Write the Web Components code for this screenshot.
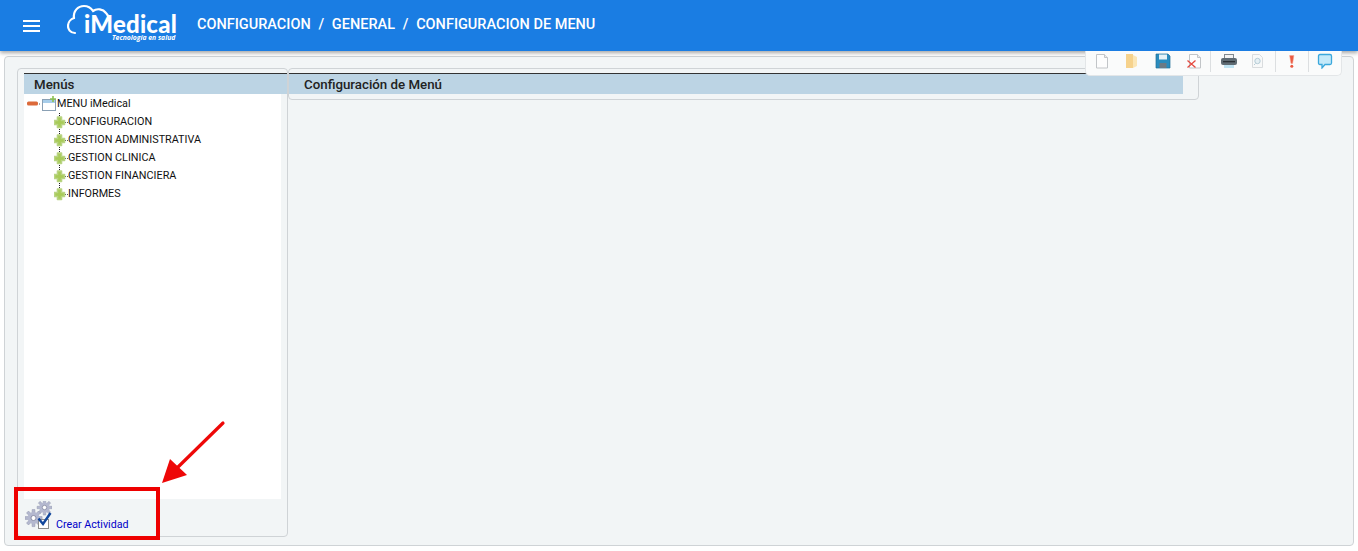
<!DOCTYPE html>
<html lang="es">
<head>
<meta charset="utf-8">
<title>iMedical</title>
<style>
    html, body { margin: 0; height: 100%; background: #fff; overflow: hidden; }
    body { font-family: Roboto, "Liberation Sans", sans-serif; }
</style>
</head>
<body>
<app-page>
    <app-header slot="header">
        <span>CONFIGURACION</span><span>/</span><span>GENERAL</span><span>/</span><span>CONFIGURACION DE MENU</span>
    </app-header>
    <left-panel slot="left" heading="Menús">
        <tree-root label="MENU iMedical">
            <tree-item>CONFIGURACION</tree-item>
            <tree-item>GESTION ADMINISTRATIVA</tree-item>
            <tree-item>GESTION CLINICA</tree-item>
            <tree-item>GESTION FINANCIERA</tree-item>
            <tree-item last>INFORMES</tree-item>
        </tree-root>
    </left-panel>
    <right-panel slot="right" heading="Configuración de Menú"></right-panel>
    <tool-bar slot="overlay"></tool-bar>
</app-page>

<script>
class AppPage extends HTMLElement {
    constructor() {
        super();
        this.attachShadow({ mode: "open" });
    }

    connectedCallback() {
        this.shadowRoot.innerHTML = `
            <style>
                :host { display: block; position: relative; width: 1358px; height: 551px; }
                #frame {
                    box-sizing: border-box;
                    height: 490px;
                    margin: 5px 4px 0 4px;
                    padding: 11px 0 8px 12px;
                    background: #f2f5f6;
                    border: 1px solid #cfd3d6;
                    border-radius: 4px;
                    display: flex;
                    align-items: flex-start;
                }
                #box { position: absolute; left: 14px; top: 487px; width: 146px; height: 53px; box-sizing: border-box; border: 4px solid #ee0000; }
                #arrow { position: absolute; left: 155px; top: 415px; }
            </style>
            <slot name="header"></slot>
            <div id="frame">
                <slot name="left"></slot>
                <slot name="right"></slot>
            </div>
            <slot name="overlay"></slot>
            <div id="box"></div>
            <svg id="arrow" width="75" height="75" viewBox="0 0 75 75">
                <path d="M68 8 21 54" stroke="#ee0808" stroke-width="3.2" stroke-linecap="round" fill="none"/>
                <path d="M7 68 15 44 32 60Z" fill="#ee0808"/>
            </svg>
        `;
    }
}

class AppHeader extends HTMLElement {
    constructor() {
        super();
        this.attachShadow({ mode: "open" });
    }

    connectedCallback() {
        this.shadowRoot.innerHTML = `
            <style>
                :host {
                    display: flex;
                    align-items: center;
                    height: 51px;
                    background: #1a7de3;
                    color: #fff;
                    box-shadow: 0 2px 4px rgba(0, 0, 0, .35);
                    position: relative;
                    padding-left: 23px;
                }
                #burger { width: 17px; display: grid; gap: 3px; margin-right: 27px; }
                #burger i { display: block; height: 2px; background: #fff; }
                #logo { position: relative; width: 130px; height: 51px; flex: none; }
                #logo svg { position: absolute; left: 0; top: 0; }
                #name {
                    position: absolute; left: 17px; top: 14px;
                    font: 900 24px/20px Lato, Roboto, sans-serif;
                    letter-spacing: .2px;
                }
                #tag {
                    position: absolute; left: 45px; top: 34px;
                    font: italic 700 6.8px/7px "Open Sans", sans-serif;
                    white-space: nowrap;
                }
                #crumbs {
                    display: flex;
                    gap: 7.75px;
                    font: 500 14.5px/18px Roboto, sans-serif;
                    position: relative;
                    top: -1px;
                }
            </style>
            <div id="burger"><i></i><i></i><i></i></div>
            <div id="logo">
                <svg width="80" height="40" viewBox="0 0 80 40" fill="none" stroke="#fff" stroke-width="2.2" stroke-linecap="round">
                    <path d="M8 33C3 33 1 29 1 26 1 22 4 19 7 18"/>
                    <path d="M7 18C6 11 11 6 17 6 21 6 24 8 26 11 30 8 36 9 39 13 41 15 42 18 42 20"/>
                </svg>
                <span id="name">iMedical</span>
                <span id="tag">Tecnología en salud</span>
            </div>
            <div id="crumbs"><slot></slot></div>
        `;
    }
}

class LeftPanel extends HTMLElement {
    constructor() {
        super();
        this.attachShadow({ mode: "open" });
    }

    connectedCallback() {
        this.shadowRoot.innerHTML = `
            <style>
                :host {
                    display: block;
                    box-sizing: border-box;
                    width: 271px;
                    height: 469px;
                    padding: 4px 0 0 6px;
                    border: 1px solid #cfd3d6;
                    border-radius: 4px;
                }
                h2 {
                    margin: 0;
                    height: 21px;
                    box-sizing: border-box;
                    padding-left: 10px;
                    background: #bcd4e4;
                    border-top: 1px solid #333;
                    color: #222;
                    font: 500 13.3px/21px Roboto, sans-serif;
                }
                #tree { box-sizing: border-box; width: 257px; height: 405px; background: #fff; padding-top: 1px; }
                #foot { display: flex; align-items: flex-end; height: 31px; padding: 1px 0 0 1px; gap: 4px; }
                #foot a { color: #0000c8; font: 10.7px/13px Roboto, sans-serif; text-decoration: none; }
            </style>
            <h2>${this.getAttribute("heading")}</h2>
            <div id="tree"><slot></slot></div>
            <div id="foot">
                <svg width="27" height="30" viewBox="0 0 27 30">
                    <defs>
                        <g id="gear">
                            <path d="M-1.4-8.4h2.8v17h-2.8zM-8.4-1.4h17v2.8h-17zM-7-5 -5-7 7 5 5 7zM5-7 7-5 -5 7 -7 5z" fill="#b4b8cf" stroke="#8f93ab" stroke-width=".5"/>
                            <circle r="6" fill="#b4b8cf"/>
                            <circle r="2.5" fill="#fff" stroke="#7c809a" stroke-width=".8"/>
                        </g>
                    </defs>
                    <use href="#gear" transform="translate(19.5 6.5) scale(.88)"/>
                    <use href="#gear" transform="translate(8.5 17)"/>
                    <rect x="13.5" y="18.5" width="10" height="9" fill="#fff" stroke="#8c8c8c"/>
                    <path d="M13.5 17.5 18 23 25.5 12" fill="none" stroke="#12479c" stroke-width="2.4"/>
                </svg>
                <a href="#">Crear Actividad</a>
            </div>
        `;
    }
}

class RightPanel extends HTMLElement {
    constructor() {
        super();
        this.attachShadow({ mode: "open" });
    }

    connectedCallback() {
        this.shadowRoot.innerHTML = `
            <style>
                :host {
                    display: block;
                    box-sizing: border-box;
                    width: 911px;
                    height: 32px;
                    padding: 4px 15px 0 0;
                    border: 1px solid #cfd3d6;
                    border-radius: 4px;
                }
                h2 {
                    margin: 0;
                    height: 21px;
                    box-sizing: border-box;
                    padding-left: 15px;
                    background: #bcd4e4;
                    border-top: 1px solid #333;
                    color: #222;
                    font: 500 13.3px/21px Roboto, sans-serif;
                }
            </style>
            <h2>${this.getAttribute("heading")}</h2>
        `;
    }
}

class TreeRoot extends HTMLElement {
    constructor() {
        super();
        this.attachShadow({ mode: "open" });
    }

    connectedCallback() {
        this.shadowRoot.innerHTML = `
            <style>
                :host { display: block; color: #111; font: 10.8px/18px Roboto, sans-serif; }
                #row { display: flex; align-items: center; height: 18px; padding-left: 3px; }
                #kids { padding-left: 30px; }
            </style>
            <div id="row">
                <svg width="30" height="18" viewBox="0 0 30 18">
                    <rect x="0" y="6.5" width="11" height="4" rx="1.5" fill="#dc6a3a"/>
                    <path d="M12 9h2" stroke="#555" stroke-dasharray="1 1"/>
                    <rect x="15.5" y="4.500" width="13" height="11" fill="#fff" stroke="#8aa0b4"/>
                    <rect x="16" y="5" width="12" height="3" fill="#a7cdea"/>
                    <path d="M26 1v6M23 4h6" stroke="#8cc152" stroke-width="1.6"/>
                </svg>
                <span>${this.getAttribute("label")}</span>
            </div>
            <div id="kids"><slot></slot></div>
        `;
    }
}

class TreeItem extends HTMLElement {
    constructor() {
        super();
        this.attachShadow({ mode: "open" });
    }

    connectedCallback() {
        const stem = this.hasAttribute("last") ? "M5.5 0v9" : "M5.5 0v18";
        this.shadowRoot.innerHTML = `
            <style>
                :host { display: flex; align-items: center; height: 18px; white-space: nowrap; }
                svg { flex: none; }
            </style>
            <svg width="14" height="18" viewBox="0 0 14 18">
                <path d="${stem}" stroke="#222" stroke-dasharray="1 1"/>
                <path d="M11 9.5h3" stroke="#555" stroke-dasharray="1 1"/>
                <path d="M3.5 4h4v3.500h3v4h-3v3h-4v-3h-3v-4h3z" fill="#a8cb58" stroke="#b9d483" stroke-width="1.6" stroke-linejoin="round"/>
            </svg>
            <slot></slot>
        `;
    }
}

class ToolBar extends HTMLElement {
    constructor() {
        super();
        this.attachShadow({ mode: "open" });
    }

    connectedCallback() {
        const page = (x) => `<path d="M${x}.5 1.5h8l3 3v10.5h-11z" fill="#fdfdfd" stroke="#c2c5c8"/><path d="M${x + 8}.5 1.5v3h3" fill="#ececec" stroke="#c2c5c8"/>`;
        // [left margin, width, svg body]; a null body is a separator
        const items = [
            [8, 16, page(2)],
            [14, 16, `<path d="M2 1h7v14H2z" fill="#f6d28c"/><path d="M9 2l4 2v9l-4 2z" fill="#fbe6b6"/>`],
            [15, 16, `<path d="M1 1h12l2 2v12H1z" fill="#2a8cbe" stroke="#1f7099" stroke-width=".7"/><rect x="4" y="1.5" width="8" height="5" fill="#e6f2f7"/><rect x="4.5" y="10" width="7" height="5" fill="#6c7a84"/>`],
            [15, 16, `${page(3)}<path d="M1.5 7.5l8 7M9.5 7.5l-8 7" stroke="#e54a40" stroke-width="1.3"/>`],
            [8, 1, null],
            [8, 20, `<rect x="5.5" y="1.5" width="9" height="4" fill="#f2f2f2" stroke="#81898f"/><rect x="2" y="5" width="16" height="7" rx="2" fill="#5f6b73"/><rect x="4" y="8" width="12" height="1.3" fill="#2a3136"/><rect x="5" y="12" width="10" height="3" fill="#bfe3f2"/>`],
            [11, 16, `<path d="M2.5 1.5h7l3 3v10h-10z" fill="#f8f9f9" stroke="#d9dcde"/><circle cx="7.5" cy="8" r="2.7" fill="#e6f0f4" stroke="#b5ccd6"/><path d="M5.5 10.5l-1.5 1.5" stroke="#b5ccd6"/>`],
            [9, 1, null],
            [8, 16, `<path d="M5.6 2.500h4.300L8.600 10.500H7z" fill="#ea5a42" stroke="#f4a08c" stroke-width=".5"/><circle cx="7.800" cy="13.300" r="1.500" fill="#ea5a42"/>`],
            [8, 1, null],
            [8, 16, `<path d="M1.500 3Q1.500 1.500 3 1.500h10q1.500 0 1.500 1.500v7q0 1.500-1.500 1.500H8L5 15v-3.500H3q-1.500 0-1.500-1.500z" fill="#c4e9f9" stroke="#3ba8dc" stroke-width="1.300"/>`],
        ];
        const html = items.map(([ml, w, body]) => body === null
            ? `<i style="margin-left:${ml}px"></i>`
            : `<svg style="margin-left:${ml}px" width="${w}" height="16" viewBox="0 0 ${w} 16">${body}</svg>`).join("");
        this.shadowRoot.innerHTML = `
            <style>
                :host {
                    display: flex;
                    align-items: flex-start;
                    position: absolute;
                    left: 1085px;
                    top: 51px;
                    box-sizing: border-box;
                    width: 257px;
                    height: 25px;
                    padding: 2px 0 0 0;
                    background: #fafbfb;
                    border: 1px solid #e3e6e8;
                    border-top: 0;
                    border-radius: 0 0 5px 5px;
                }
                svg { display: block; flex: none; }
                i { display: block; width: 1px; height: 21px; margin-top: -2px; background: #dcdfe1; flex: none; }
            </style>
            ${html}
        `;
    }
}

customElements.define("app-page", AppPage);
customElements.define("app-header", AppHeader);
customElements.define("left-panel", LeftPanel);
customElements.define("right-panel", RightPanel);
customElements.define("tree-root", TreeRoot);
customElements.define("tree-item", TreeItem);
customElements.define("tool-bar", ToolBar);
</script>
</body>
</html>
